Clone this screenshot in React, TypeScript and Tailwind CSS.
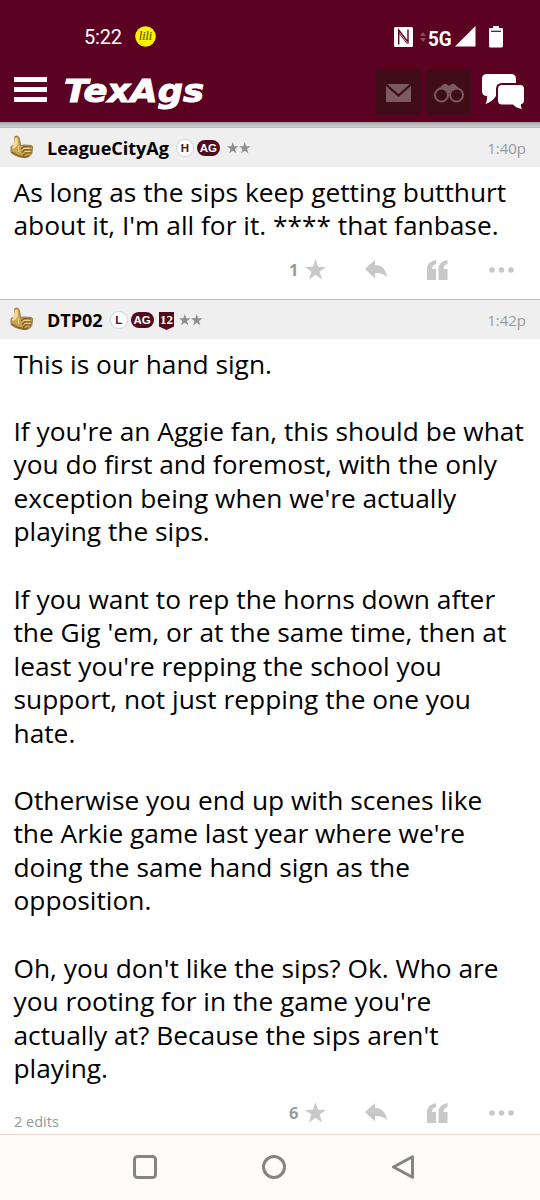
import { ReactNode } from 'react'

interface PostProps {
  author: string
  initial: string
  twelfth?: boolean
  time: string
  lines: string[]
  stars: number
  edits?: string
}

const posts: PostProps[] = [
  {
    author: 'LeagueCityAg',
    initial: 'H',
    time: '1:40p',
    stars: 1,
    lines: ['As long as the sips keep getting butthurt', "about it, I'm all for it. **** that fanbase."],
  },
  {
    author: 'DTP02',
    initial: 'L',
    twelfth: true,
    time: '1:42p',
    stars: 6,
    edits: '2 edits',
    lines: [
      'This is our hand sign.',
      '',
      "If you're an Aggie fan, this should be what",
      'you do first and foremost, with the only',
      "exception being when we're actually",
      'playing the sips.',
      '',
      'If you want to rep the horns down after',
      "the Gig 'em, or at the same time, then at",
      "least you're repping the school you",
      'support, not just repping the one you',
      'hate.',
      '',
      'Otherwise you end up with scenes like',
      "the Arkie game last year where we're",
      'doing the same hand sign as the',
      'opposition.',
      '',
      "Oh, you don't like the sips? Ok. Who are",
      "you rooting for in the game you're",
      "actually at? Because the sips aren't",
      'playing.',
    ],
  },
]

function StatusBar() {
  return (
    <div className="flex h-[73px] items-center pl-[84px] text-white">
      <span className="w-[51px] font-['Roboto',sans-serif] text-[20px] leading-6 tracking-[-0.2px]">5:22</span>
      <svg className="block" width="21" height="21" viewBox="0 0 21 21">
        <circle cx="10.5" cy="10.5" r="10.3" fill="#fbf400" />
        <text x="10.5" y="14" textAnchor="middle" fontFamily="Liberation Serif, serif" fontStyle="italic" fontSize="11.5" fill="#55500c" stroke="#55500c" strokeWidth="0.2">lili</text>
      </svg>
      <svg className="ml-[238px] block" width="19" height="20" viewBox="0 0 19 20">
        <rect width="19" height="20" rx="1.5" fill="#fff" />
        <path d="M4.7 17.5V3L14 15V2.5" fill="none" stroke="#5b0223" strokeWidth="1.4" />
        <path d="M5 6L13.5 17" fill="none" stroke="#5b0223" strokeWidth="1" />
      </svg>
      <svg className="ml-[7px] block" width="6" height="12" viewBox="0 0 6 12">
        <path d="M0 5L3 1L6 5ZM0 7L3 11L6 7Z" fill="#8a4a63" />
      </svg>
      <span className="relative top-[2px] ml-[2px] w-[27px] origin-left scale-x-90 font-['Roboto',sans-serif] text-[21px] font-bold leading-6">5G</span>
      <svg className="block" width="21" height="21" viewBox="0 0 21 21">
        <path d="M0 20.5L20.5 0V20.5Z" fill="#fff" />
      </svg>
      <svg className="ml-[13px] block" width="14" height="22" viewBox="0 0 14 22">
        <path d="M4 0h6v2h3a1 1 0 0 1 1 1v17a1.5 1.5 0 0 1-1.5 1.5h-11A1.5 1.5 0 0 1 0 20V3a1 1 0 0 1 1-1h3z" fill="#fff" />
        <path d="M2 5.3h10" stroke="#5b0223" strokeWidth="1.2" />
      </svg>
    </div>
  )
}

function HeaderButton({ children }: { children: ReactNode }) {
  return <button className="flex h-[45px] w-[45px] items-center justify-center rounded-[4px] bg-[#3e0d18]">{children}</button>
}

function NavBar() {
  return (
    <div className="flex h-[49px] items-start pl-[14px]">
      <button className="mt-1 flex w-[33px] flex-col gap-[5px]">
        <span className="h-[5px] w-full bg-white" />
        <span className="h-[5px] w-full bg-white" />
        <span className="h-[5px] w-full bg-white" />
      </button>
      <svg className="ml-[17px] block" width="142" height="40" viewBox="0 0 142 40">
        <text x="0" y="28.5" textLength="140" lengthAdjust="spacingAndGlyphs" fontFamily="DejaVu Sans, sans-serif" fontWeight="bold" fontStyle="italic" fontSize="32" fill="#fff" stroke="#fff" strokeWidth="1">TexAgs</text>
      </svg>
      <div className="-mt-[3px] ml-auto flex gap-[5px] pr-[16px]">
        <HeaderButton>
          <svg width="25" height="18" viewBox="0 0 25 18">
            <path d="M0 0h25v18H0z" fill="#7b5a63" />
            <path d="M0 0.5L12.5 11.5L25 0.5" fill="none" stroke="#3e0d18" strokeWidth="2.2" />
          </svg>
        </HeaderButton>
        <HeaderButton>
          <svg width="30" height="20" viewBox="0 0 30 20" className="text-[#7b5a63]">
            <path d="M3 7L9 1.5Q11-.2 13 1.5L15 3L17 1.5Q19-.2 21 1.5L27 7L23 8L18 10H12L7 8Z" fill="currentColor" />
            <circle cx="7.5" cy="12" r="6.5" fill="#3e0d18" stroke="currentColor" strokeWidth="2" />
            <circle cx="22.5" cy="12" r="6.5" fill="#3e0d18" stroke="currentColor" strokeWidth="2" />
          </svg>
        </HeaderButton>
        <svg className="ml-[6px] mt-[4px] block" width="42" height="36" viewBox="0 0 42 36">
          <path d="M5 0H29Q34 0 34 5V17Q34 22 29 22H14Q10 28 3.5 30Q5.5 26 5 22Q0 22 0 17V5Q0 0 5 0Z" fill="#fff" />
          <path d="M20 11H38Q42 11 42 15V26Q42 30 39 30Q38.5 32.5 40 35Q34 34 31 30.5H20Q16 30.5 16 26.5V15Q16 11 20 11Z" fill="#fff" stroke="#5b0223" strokeWidth="4" paintOrder="stroke" />
        </svg>
      </div>
    </div>
  )
}

function Thumb() {
  return (
    <svg className="block" width="24" height="24" viewBox="0 0 24 24">
      <path d="M4.8 1.5Q7.5.2 9 2.5L10 6.5L10.5 10.5L14 10L21.5 10.5Q23.5 11.5 22.5 13L21.8 18.5Q20 22.5 15 22.8L9 21.8L3.5 19.5L1 17.5V11.5L5 9.5Z" fill="#c9a350" stroke="#7d682f" strokeWidth="0.8" />
      <path d="M5.5 2.5L7.5 3L8 9L5 13L2 14Z" fill="#f1d99a" />
      <path d="M11 14L14 11.5L21.5 12M12 17.5L15 14.8L22 15M13 20.5L16 17.8L21.5 18" fill="none" stroke="#75571f" strokeWidth="1.1" />
      <path d="M13 13.5L20 13.3M14.5 16.4L20.5 16.4M8 11L9 17" fill="none" stroke="#f1d58d" strokeWidth="1" />
      <path d="M2 17L8 20.5L15 21.8L19 20.5" fill="none" stroke="#80601f" strokeWidth="1.3" />
    </svg>
  )
}

function Star({ size, className }: { size: number; className: string }) {
  return (
    <svg width={size} height={size} viewBox="0 0 20 20" className={className}>
      <path d="M10 0L12.4 7.3L20 7.5L13.9 12L16.3 19.5L10 15L3.7 19.5L6.1 12L0 7.5L7.6 7.3Z" fill="currentColor" />
    </svg>
  )
}

function PostHeader({ author, initial, twelfth, time }: PostProps) {
  return (
    <div className="flex h-[38px] items-center bg-[#efefef] pl-[10px] pr-[14px]">
      <div className="-mt-[3px]"><Thumb /></div>
      <span className="ml-[13px] text-[18px] font-bold leading-6 text-black">{author}</span>
      <span className="ml-[7px] flex h-[18px] w-[18px] items-center justify-center rounded-full border border-[#d4d4d4] bg-white pt-px font-['Liberation_Sans',sans-serif] text-[11.5px] font-bold leading-none text-[#50101f]">{initial}</span>
      <span className="ml-[3px] flex h-[16px] w-[23px] items-center justify-center rounded-full bg-[#500b1c] pt-px font-['Liberation_Sans',sans-serif] text-[11.5px] font-bold leading-none text-white">AG</span>
      {twelfth && (
        <svg className="ml-[5px] mt-[2px] block" width="15" height="18" viewBox="0 0 15 18">
          <path d="M0 0H15V14.5L7.5 18L0 14.5Z" fill="#500b1c" />
          <text x="7.5" y="12" textAnchor="middle" fontFamily="Liberation Serif, serif" fontWeight="bold" fontSize="13" fill="#fff">12</text>
        </svg>
      )}
      <div className={`flex gap-[1px] text-[#8e8e8e] ${twelfth ? 'ml-[5px]' : 'ml-[7px]'}`}>
        <Star size={11.5} className="block" />
        <Star size={11.5} className="block" />
      </div>
      <span className="ml-auto text-[15px] leading-5 text-[#999]">{time}</span>
    </div>
  )
}

function PostActions({ stars, edits }: { stars: number; edits?: string }) {
  return (
    <div className="flex h-[22px] items-center pl-[14px] text-[#c8c8c8]">
      <span className="mt-[19px] w-[269px] text-[14.5px] leading-5 text-[#999]">{edits}</span>
      <span className="w-[16px] pl-[6px] text-[16.5px] font-bold leading-5 text-[#999]">{stars}</span>
      <Star size={21} className="ml-[6px] block" />
      <svg className="ml-[39px] block" width="22" height="19" viewBox="0 0 22 19">
        <path d="M0 9L10 0V5Q20 5 22 17Q17 12.5 10 13V18.5Z" fill="currentColor" />
      </svg>
      <svg className="ml-[40px] block" width="21" height="20" viewBox="0 0 21 20">
        <path d="M9 0V4Q5 5 5 9H9V20H0V9Q0 1.5 9 0ZM20.5 0V4Q16.5 5 16.5 9H20.5V20H11.5V9Q11.5 1.5 20.5 0Z" fill="currentColor" />
      </svg>
      <svg className="ml-[41px] block" width="25" height="6" viewBox="0 0 25 6">
        <circle cx="3" cy="3" r="2.8" fill="currentColor" />
        <circle cx="12.5" cy="3" r="2.8" fill="currentColor" />
        <circle cx="22" cy="3" r="2.8" fill="currentColor" />
      </svg>
    </div>
  )
}

function Post(props: PostProps) {
  return (
    <article className={props.edits ? 'h-[835px]' : 'h-[172px]'}>
      <div className="h-[2px] border-t border-[#b8b8b8] bg-[#efefef]" />
      <PostHeader {...props} />
      <div className="pb-[15.8px] pl-[13.5px] pt-[8.7px] text-[26.3px] leading-[33.56px] text-black">
        {props.lines.map((line, i) => (
          <p key={i} className="h-[33.56px] whitespace-nowrap">{line}</p>
        ))}
      </div>
      <PostActions stars={props.stars} edits={props.edits} />
    </article>
  )
}

export default function App() {
  return (
    <div className="flex h-[1200px] w-[540px] flex-col overflow-hidden bg-white font-['Open_Sans',sans-serif]">
      <header className="h-[122px] shrink-0 bg-[#5b0223]">
        <StatusBar />
        <NavBar />
      </header>
      <div className="h-[5px] shrink-0 bg-linear-to-b from-[#a3a3a3] to-[#d0d0d0]" />
      <main className="h-[1007px] shrink-0 overflow-hidden">
        {posts.map(post => <Post key={post.author} {...post} />)}
      </main>
      <footer className="flex h-[66px] items-center justify-center gap-[105px] border-t border-[#efcfcc] bg-[#fffbfa] pb-px pl-[8px] text-[#868382]">
        <svg width="24" height="24" viewBox="0 0 24 24" fill="none" stroke="currentColor" strokeWidth="3">
          <rect x="1.5" y="1.5" width="21" height="21" rx="3" />
        </svg>
        <svg width="24" height="24" viewBox="0 0 24 24" fill="none" stroke="currentColor" strokeWidth="3">
          <circle cx="12" cy="12" r="10.5" />
        </svg>
        <svg width="24" height="24" viewBox="0 0 24 24" fill="none" stroke="currentColor" strokeWidth="3" strokeLinejoin="round">
          <path d="M21.5 1.8V22.2L2.5 12Z" />
        </svg>
      </footer>
    </div>
  )
}
